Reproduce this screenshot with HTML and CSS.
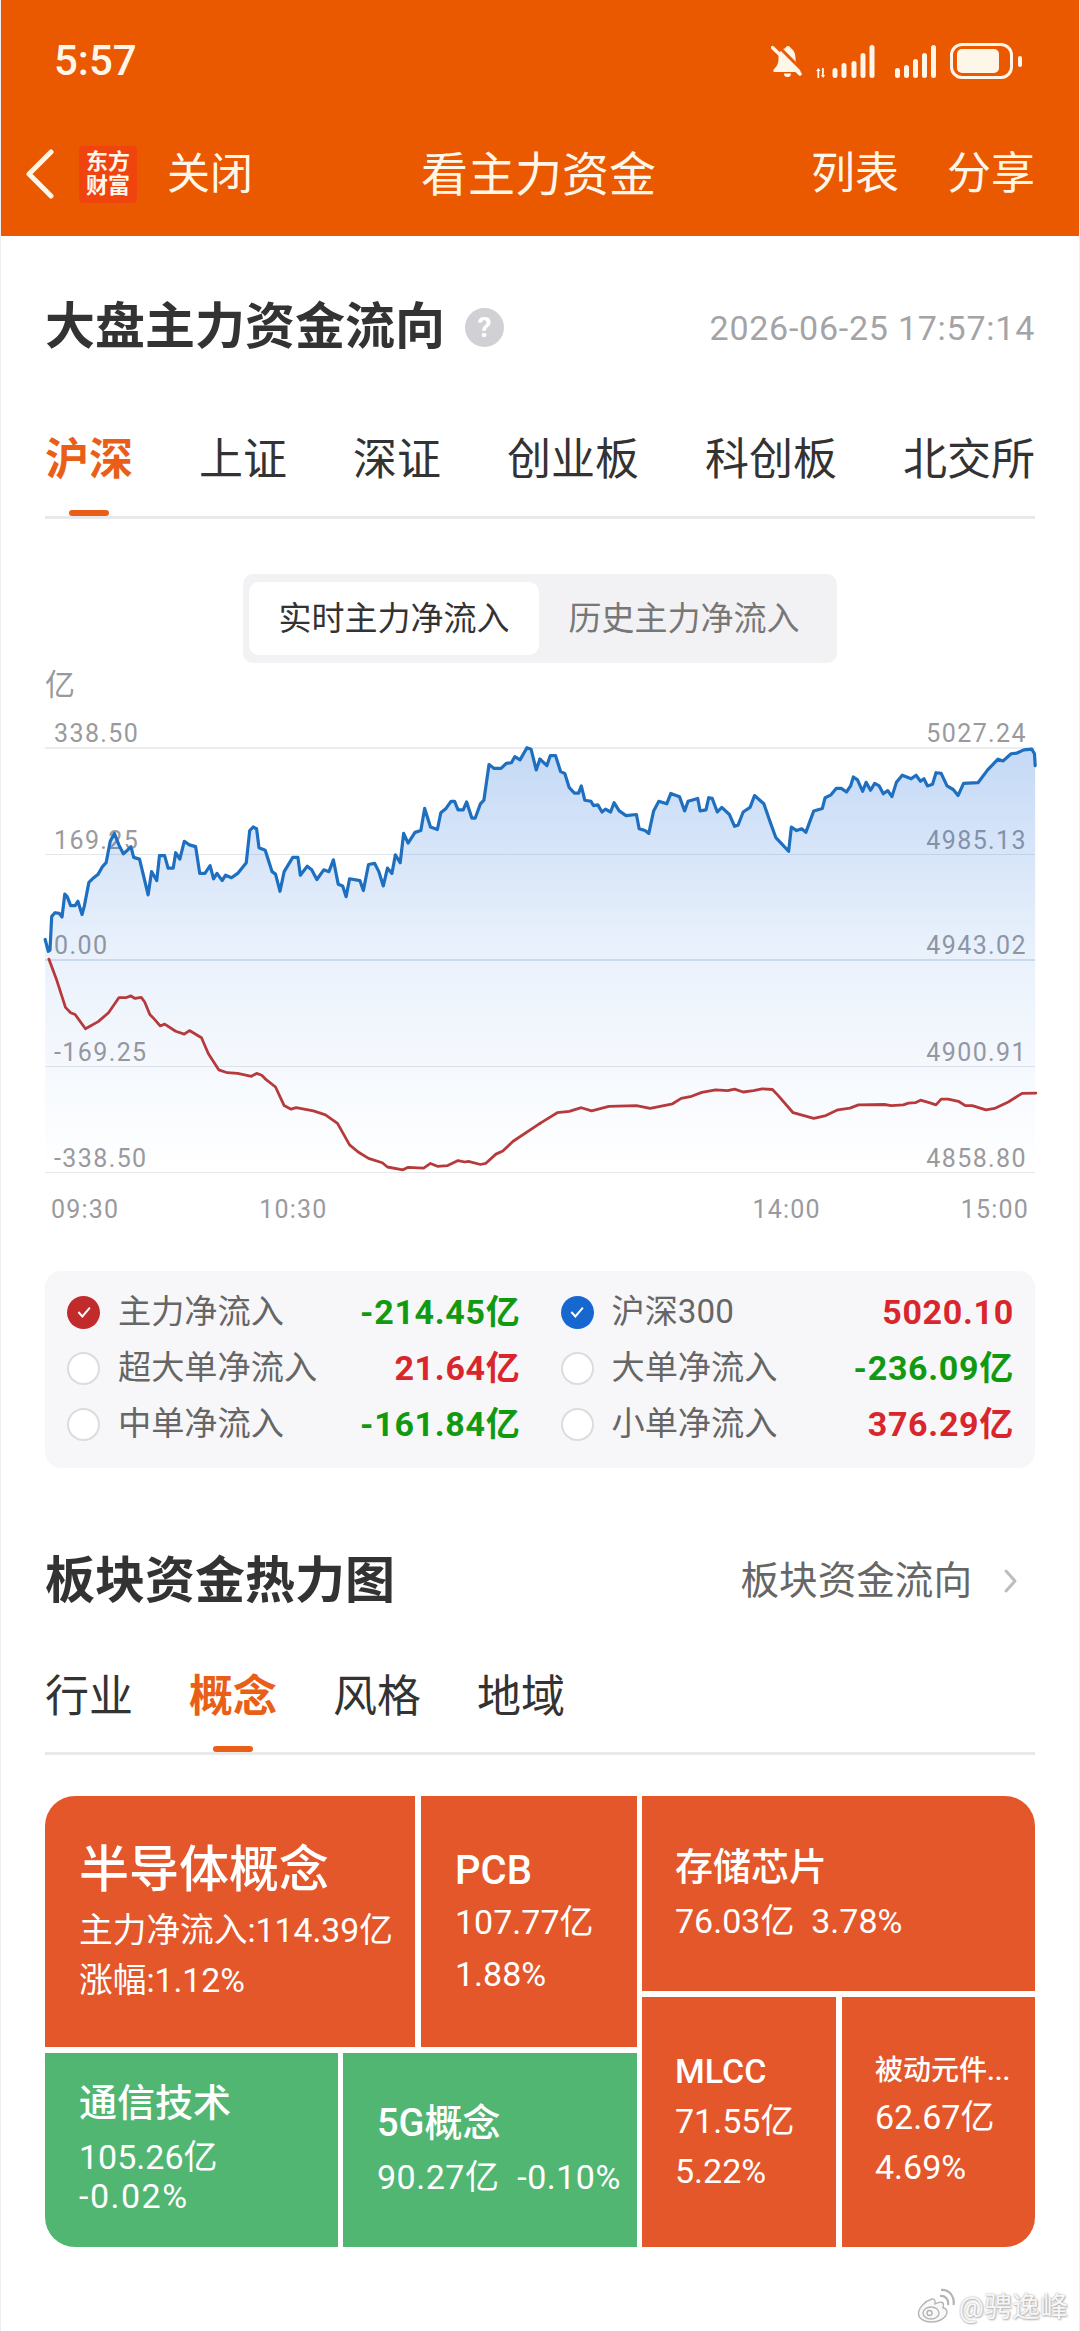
FILE: index.html
```html
<!DOCTYPE html>
<html lang="zh-CN">
<head>
<meta charset="utf-8">
<title>看主力资金</title>
<link rel="stylesheet" href="styles.css">
</head>
<body>
<div class="page">
  <header class="appbar">
    <div class="status">
      <span class="clock">5:57</span>
      <div class="status-icons">
        <svg class="ic-bell" viewBox="0 0 32 34" aria-hidden="true">
          <path d="M17 2c-1.500 0-2.500 1-2.700 2.300C9.500 5.500 7.500 9.500 7.500 14c0 5-1 8-5 11.500V28h27v-2.500c-4-3.500-5-6.500-5-11.500 0-4.500-2-8.500-4.800-9.700C19.500 3 18.500 2 17 2zM13 29.500a3.500 3.500 0 0 0 7 0z"/>
          <path class="bell-gap" d="M5 0l27 27"/>
          <path class="bell-cut" d="M1.500 3.500L29 30"/>
        </svg>
        <svg class="ic-signal-a" viewBox="0 0 60 33" aria-hidden="true">
          <path d="M1 26l2.500-3 2 3H4.200v7H2.400v-7zM7 23h1.800v7h1.300l-2 3-2.300-3H7z"/>
          <rect x="17.500" y="23" width="5" height="10" rx="2.500"/>
          <rect x="26.500" y="18" width="5" height="15" rx="2.500"/>
          <rect x="36.500" y="16" width="5" height="17" rx="2.500"/>
          <rect x="45.500" y="8" width="5" height="25" rx="2.500"/>
          <rect x="54.500" y="0" width="5" height="33" rx="2.500"/>
        </svg>
        <svg class="ic-signal-b" viewBox="0 0 41 33" aria-hidden="true">
          <rect x="0" y="23" width="5" height="10" rx="2.500"/>
          <rect x="9" y="20" width="5" height="13" rx="2.500"/>
          <rect x="18" y="14" width="5" height="19" rx="2.500"/>
          <rect x="27" y="8" width="5" height="25" rx="2.500"/>
          <rect x="36" y="0" width="5" height="33" rx="2.500"/>
        </svg>
        <div class="battery"><span class="battery-fill"></span></div>
        <span class="battery-nub"></span>
      </div>
    </div>
    <nav class="navbar">
      <div class="nav-left">
        <svg class="ic-back" viewBox="0 0 31 50" aria-hidden="true"><path d="M27 3L5 25l22 22"/></svg>
        <div class="logo"><span>东方</span><span>财富</span></div>
        <span class="nav-close">关闭</span>
      </div>
      <div class="nav-title">看主力资金</div>
      <div class="nav-right"><span>列表</span><span>分享</span></div>
    </nav>
  </header>

  <main class="content">
    <div class="section-head">
      <h1 class="section-title">大盘主力资金流向</h1>
      <span class="help">?</span>
      <span class="stamp">2026-06-25 17:57:14</span>
    </div>

    <div class="tabs tabs-spread">
      <span class="tab tab-active">沪深</span>
      <span class="tab">上证</span>
      <span class="tab">深证</span>
      <span class="tab">创业板</span>
      <span class="tab">科创板</span>
      <span class="tab">北交所</span>
    </div>

    <div class="segment">
      <span class="seg seg-on">实时主力净流入</span>
      <span class="seg">历史主力净流入</span>
    </div>

    <div class="unit">亿</div>
    <div class="plot">
      <div class="grid">
        <div class="grid-row grid-first"><span>338.50</span><span>5027.24</span></div>
        <div class="grid-row"><span>169.25</span><span>4985.13</span></div>
        <div class="grid-row grid-mid"><span>0.00</span><span>4943.02</span></div>
        <div class="grid-row"><span>-169.25</span><span>4900.91</span></div>
        <div class="grid-row"><span>-338.50</span><span>4858.80</span></div>
      </div>
      <svg class="lines" viewBox="130.52 90 2874.96 1318.8" preserveAspectRatio="none" aria-hidden="true">
        <defs>
          <linearGradient id="areaFade" gradientUnits="userSpaceOnUse" x1="0" y1="220" x2="0" y2="1407">
            <stop offset="0" stop-color="#1e6edc" stop-opacity=".26"/>
            <stop offset=".5" stop-color="#1e6edc" stop-opacity=".09"/>
            <stop offset="1" stop-color="#1e6edc" stop-opacity="0"/>
          </linearGradient>
        </defs>
        <!-- morning half -->
        <g>
          <polygon class="area" points="131,755 140,788 145,785 150,690 160,680 172,682 180,692 188,628 195,635 205,660 218,660 226,648 238,685 245,660 258,595 272,582 285,572 298,550 308,540 320,480 332,458 345,490 358,515 370,505 380,495 388,525 405,530 415,570 430,630 440,565 455,590 463,520 478,520 488,555 503,555 510,512 522,530 535,480 550,490 568,495 580,570 595,570 610,548 620,585 630,570 645,590 655,575 672,582 690,570 715,540 725,450 735,440 745,445 752,498 770,505 790,565 800,572 813,620 825,565 850,525 865,525 872,575 892,550 905,560 920,587 940,560 955,565 968,532 982,600 995,605 1005,635 1015,585 1045,590 1055,618 1070,545 1088,542 1100,565 1113,605 1125,555 1138,570 1148,518 1162,540 1172,458 1185,485 1205,455 1222,450 1233,388 1250,440 1270,447 1280,400 1295,388 1310,368 1320,368 1330,392 1345,392 1355,370 1370,415 1380,415 1395,375 1405,365 1420,265 1435,276 1455,276 1470,262 1485,260 1495,243 1510,252 1530,218 1542,222 1557,280 1568,250 1568,1407 131,1407"/>
          <polyline class="line-blue" points="131,755 140,788 145,785 150,690 160,680 172,682 180,692 188,628 195,635 205,660 218,660 226,648 238,685 245,660 258,595 272,582 285,572 298,550 308,540 320,480 332,458 345,490 358,515 370,505 380,495 388,525 405,530 415,570 430,630 440,565 455,590 463,520 478,520 488,555 503,555 510,512 522,530 535,480 550,490 568,495 580,570 595,570 610,548 620,585 630,570 645,590 655,575 672,582 690,570 715,540 725,450 735,440 745,445 752,498 770,505 790,565 800,572 813,620 825,565 850,525 865,525 872,575 892,550 905,560 920,587 940,560 955,565 968,532 982,600 995,605 1005,635 1015,585 1045,590 1055,618 1070,545 1088,542 1100,565 1113,605 1125,555 1138,570 1148,518 1162,540 1172,458 1185,485 1205,455 1222,450 1233,388 1250,440 1270,447 1280,400 1295,388 1310,368 1320,368 1330,392 1345,392 1355,370 1370,415 1380,415 1395,375 1405,365 1420,265 1435,276 1455,276 1470,262 1485,260 1495,243 1510,252 1530,218 1542,222 1557,280 1568,250"/>
          <polyline class="line-red" points="142,810 165,870 190,945 205,960 218,965 248,1005 285,985 315,960 345,918 365,918 380,913 392,920 410,917 420,930 435,965 450,980 465,997 478,992 510,1012 535,1020 550,1010 585,1030 605,1075 635,1120 660,1128 690,1130 730,1138 745,1130 760,1135 770,1145 800,1168 825,1220 845,1230 860,1226 910,1235 945,1246 980,1270 1015,1330 1040,1350 1070,1368 1110,1380 1125,1392 1170,1400 1185,1393 1230,1395 1250,1382 1270,1390 1300,1388 1330,1374 1350,1378 1360,1376 1395,1385 1410,1382 1440,1356 1460,1347 1490,1320 1568,1270"/>
        </g>
        <!-- afternoon half -->
        <g transform="translate(1568 0)">
          <polygon class="area" points="0,250 20,268 30,240 45,240 60,285 72,290 85,330 100,345 112,345 120,325 130,365 148,368 155,380 168,378 180,398 190,390 205,398 215,372 230,395 250,408 280,405 288,445 305,450 316,458 330,395 345,368 368,375 380,346 405,355 420,395 430,368 458,360 465,395 482,392 490,358 500,360 515,398 528,385 550,405 565,438 575,435 590,398 610,385 623,352 650,375 670,430 685,470 700,485 722,508 730,440 745,450 760,445 772,455 795,395 820,388 828,358 845,350 860,332 875,332 890,342 902,325 910,300 922,308 937,340 947,315 960,337 972,318 985,325 997,347 1010,338 1022,355 1035,315 1052,295 1078,305 1092,295 1105,312 1115,305 1125,325 1140,320 1150,288 1165,290 1182,325 1200,335 1214,352 1230,318 1272,316 1300,280 1330,250 1345,255 1368,235 1385,233 1405,224 1428,222 1436,235 1438,268 1438,1407 0,1407"/>
          <polyline class="line-blue" points="0,250 20,268 30,240 45,240 60,285 72,290 85,330 100,345 112,345 120,325 130,365 148,368 155,380 168,378 180,398 190,390 205,398 215,372 230,395 250,408 280,405 288,445 305,450 316,458 330,395 345,368 368,375 380,346 405,355 420,395 430,368 458,360 465,395 482,392 490,358 500,360 515,398 528,385 550,405 565,438 575,435 590,398 610,385 623,352 650,375 670,430 685,470 700,485 722,508 730,440 745,450 760,445 772,455 795,395 820,388 828,358 845,350 860,332 875,332 890,342 902,325 910,300 922,308 937,340 947,315 960,337 972,318 985,325 997,347 1010,338 1022,355 1035,315 1052,295 1078,305 1092,295 1105,312 1115,305 1125,325 1140,320 1150,288 1165,290 1182,325 1200,335 1214,352 1230,318 1272,316 1300,280 1330,250 1345,255 1368,235 1385,233 1405,224 1428,222 1436,235 1438,268"/>
          <polyline class="line-red" points="0,1270 20,1258 50,1240 85,1236 120,1226 150,1235 200,1222 280,1220 320,1228 385,1215 410,1200 440,1194 470,1183 510,1176 545,1178 565,1174 590,1182 620,1178 645,1173 675,1175 690,1190 735,1240 795,1256 830,1248 865,1232 900,1227 925,1218 1000,1217 1020,1220 1055,1218 1070,1213 1090,1212 1105,1205 1130,1212 1150,1218 1165,1202 1185,1202 1215,1208 1235,1220 1255,1220 1295,1232 1320,1228 1360,1210 1400,1186 1440,1185"/>
        </g>
      </svg>
    </div>
    <div class="axis">
      <span>09:30</span><span>10:30</span>
      <span class="axis-pm">14:00</span><span>15:00</span>
    </div>

    <div class="legend">
      <div class="legend-row">
        <span class="dot dot-red"><svg viewBox="0 0 16 16" aria-hidden="true"><path d="M3.500 8l3.200 3.500 6-7"/></svg></span>
        <span class="legend-name">主力净流入</span><b class="val down">-214.45亿</b>
      </div>
      <div class="legend-row">
        <span class="dot dot-blue"><svg viewBox="0 0 16 16" aria-hidden="true"><path d="M3.500 8l3.200 3.500 6-7"/></svg></span>
        <span class="legend-name">沪深300</span><b class="val up">5020.10</b>
      </div>
      <div class="legend-row">
        <span class="dot"></span>
        <span class="legend-name">超大单净流入</span><b class="val up">21.64亿</b>
      </div>
      <div class="legend-row">
        <span class="dot"></span>
        <span class="legend-name">大单净流入</span><b class="val down">-236.09亿</b>
      </div>
      <div class="legend-row">
        <span class="dot"></span>
        <span class="legend-name">中单净流入</span><b class="val down">-161.84亿</b>
      </div>
      <div class="legend-row">
        <span class="dot"></span>
        <span class="legend-name">小单净流入</span><b class="val up">376.29亿</b>
      </div>
    </div>

    <div class="section-head section-second">
      <h2 class="section-title">板块资金热力图</h2>
      <span class="more">板块资金流向</span>
      <svg class="ic-more" viewBox="0 0 15 26" aria-hidden="true"><path d="M3 3l9 10-9 10"/></svg>
    </div>

    <div class="tabs tabs-tight">
      <span class="tab">行业</span>
      <span class="tab tab-active">概念</span>
      <span class="tab">风格</span>
      <span class="tab">地域</span>
    </div>

    <div class="heatmap">
      <div class="heat-left">
        <div class="heat-row heat-row-top">
          <div class="cell hot cell-semi">
            <div class="cell-big">半导体概念</div>
            <div class="cell-line">主力净流入:114.39亿</div>
            <div class="cell-line">涨幅:1.12%</div>
          </div>
          <div class="cell hot cell-pcb">
            <div class="cell-name">PCB</div>
            <div class="cell-line">107.77亿</div>
            <div class="cell-line">1.88%</div>
          </div>
        </div>
        <div class="heat-row heat-row-bottom">
          <div class="cell cool cell-comm">
            <div class="cell-name">通信技术</div>
            <div class="cell-line">105.26亿</div>
            <div class="cell-line cell-neg">-0.02%</div>
          </div>
          <div class="cell cool cell-5g">
            <div class="cell-name">5G概念</div>
            <div class="cell-line">90.27亿&nbsp;&nbsp;-0.10%</div>
          </div>
        </div>
      </div>
      <div class="heat-right">
        <div class="cell hot cell-store">
          <div class="cell-name">存储芯片</div>
          <div class="cell-line">76.03亿&nbsp;&nbsp;3.78%</div>
        </div>
        <div class="heat-row heat-row-low">
          <div class="cell hot cell-mlcc">
            <div class="cell-name">MLCC</div>
            <div class="cell-line">71.55亿</div>
            <div class="cell-line">5.22%</div>
          </div>
          <div class="cell hot cell-passive">
            <div class="cell-name">被动元件...</div>
            <div class="cell-line">62.67亿</div>
            <div class="cell-line">4.69%</div>
          </div>
        </div>
      </div>
    </div>
  </main>

  <div class="mark">
    <svg class="mark-logo" viewBox="0 0 38 35" aria-hidden="true">
      <path d="M15 11C8 13 1.500 20 1.500 25.500 1.500 31 8 34 14.500 34 23 34 30 29 30 24c0-2.500-2-3.800-4-4.300 1-3 .5-5-1.500-5.500-2-.4-4.500.6-6.500 1.600.4-3-.5-5.500-3-4.800z"/>
      <ellipse class="mark-eye" cx="14" cy="25" rx="8" ry="6"/>
      <circle class="mark-eye" cx="12.500" cy="25" r="2.500"/>
      <path class="mark-arc" d="M23 8c5-.5 9 3 8 9M24 2c9-.5 14 7 12.500 15"/>
    </svg>
    <span>@骋逸峰</span>
  </div>
</div>
</body>
</html>
```
FILE: styles.css
```css
* { box-sizing: border-box; }

html, body { margin: 0; padding: 0; background: #fff; }

body {
  font-family: Roboto, "Noto Sans CJK SC", sans-serif;
  color: #333;
}

.page {
  position: relative;
  width: 1080px;
  height: 2331px;
  overflow: hidden;
  background: #fff;
  border-left: 1px solid #eeeeee;
  border-right: 1px solid #eeeeee;
}

/* app bar */
.appbar {
  height: 236px;
  margin: 0 -1px;
  background: #ea5800;
  color: #fff6ea;
}

.status {
  display: flex;
  align-items: center;
  justify-content: space-between;
  height: 112px;
  padding: 10px 58px 0 54px;
}

.clock {
  font-size: 42px;
  font-weight: 500;
  line-height: 44px;
}

.status-icons {
  display: flex;
  align-items: center;
}

.status-icons svg { display: block; fill: #fff6ea; }

.ic-bell { width: 32px; height: 34px; margin-right: 12px; }
.bell-gap { fill: none; stroke: #ea5800; stroke-width: 3; }
.bell-cut { fill: none; stroke: #fff6ea; stroke-width: 3.500; stroke-linecap: round; }
.ic-signal-a { width: 60px; height: 33px; margin-right: 20px; }
.ic-signal-b { width: 41px; height: 33px; margin-right: 14px; }

.battery {
  width: 63px;
  height: 36px;
  padding: 3px 4px;
  border: 3px solid #fff6ea;
  border-radius: 12px;
}

.battery-fill {
  display: block;
  width: 42px;
  height: 100%;
  background: #fff6ea;
  border-radius: 5px;
}

.battery-nub {
  width: 4px;
  height: 11px;
  margin-left: 5px;
  background: #fff6ea;
  border-radius: 2px;
}

.navbar {
  display: grid;
  grid-template-columns: 1fr auto 1fr;
  align-items: center;
  height: 124px;
  padding: 0 45px 0 24px;
}

.nav-left { display: flex; align-items: center; }

.ic-back {
  display: block;
  width: 31px;
  height: 50px;
  fill: none;
  stroke: #fff6ea;
  stroke-width: 5;
  stroke-linecap: round;
  stroke-linejoin: round;
}

.logo {
  display: flex;
  flex-direction: column;
  align-items: center;
  justify-content: center;
  width: 58px;
  height: 57px;
  margin-left: 24px;
  background: #f0440f;
  border-radius: 4px;
  font-size: 22px;
  font-weight: 700;
  line-height: 24px;
}

.nav-close { margin-left: 30px; font-size: 43px; line-height: 60px; }
.nav-title { margin-left: 18px; padding-top: 2px; font-size: 47px; line-height: 60px; }

.nav-right {
  display: flex;
  justify-content: flex-end;
  gap: 48px;
  font-size: 44px;
  line-height: 60px;
}

/* page body */
.content { padding: 61px 44px 0; }

.section-head { display: flex; align-items: center; height: 60px; }
.section-second { margin-top: 83px; }

.section-title {
  margin: 0;
  font-size: 50px;
  font-weight: 700;
  line-height: 60px;
  color: #333;
}

.help {
  width: 39px;
  height: 39px;
  margin-left: 20px;
  background: #d1d1d5;
  border-radius: 50%;
  color: #fff;
  font-size: 28px;
  font-weight: 700;
  line-height: 39px;
  text-align: center;
}

.stamp {
  margin-left: auto;
  margin-top: 2px;
  color: #a4a4a8;
  font-size: 34px;
  letter-spacing: .75px;
  line-height: 40px;
}

.more { margin-left: auto; color: #666; font-size: 38.600px; line-height: 50px; }

.ic-more {
  display: block;
  width: 15px;
  height: 26px;
  margin: 0 17px 0 31px;
  fill: none;
  stroke: #bdbdc0;
  stroke-width: 3;
  stroke-linecap: round;
  stroke-linejoin: round;
}

.tabs {
  display: flex;
  margin-top: 73px;
  padding-bottom: 26px;
  border-bottom: 3px solid #e9e9eb;
}

.tabs-spread { justify-content: space-between; }
.tabs-tight { gap: 56px; margin-top: 56px; padding-bottom: 25px; }

.tab {
  position: relative;
  color: #333;
  font-size: 44px;
  line-height: 60px;
}

.tab-active { color: #ea5f18; font-weight: 700; }

.tab-active::after {
  content: "";
  position: absolute;
  left: 50%;
  bottom: -26px;
  width: 40px;
  height: 6px;
  margin-left: -20px;
  background: #ea5f18;
  border-radius: 3px;
}

.tabs-tight .tab-active::after { bottom: -25px; }

.segment {
  display: flex;
  align-items: center;
  width: 594px;
  height: 89px;
  margin: 55px auto 0;
  padding: 0 6px;
  background: #f2f2f4;
  border-radius: 10px;
}

.seg {
  width: 290px;
  height: 73px;
  color: #777;
  font-size: 33px;
  line-height: 73px;
  text-align: center;
}

.seg-on { background: #fff; border-radius: 10px; color: #333; }

/* trend chart */
.unit {
  height: 40px;
  margin-top: -1px;
  color: #999;
  font-size: 30px;
  line-height: 46px;
}

.plot { position: relative; height: 471px; }

.grid { display: flex; flex-direction: column; height: 100%; }

.grid-row {
  display: flex;
  align-items: flex-end;
  justify-content: space-between;
  height: 106px;
  padding: 0 8px 1px 9px;
  border-bottom: 1px solid #e4e7ec;
  color: #9a9a9e;
  font-size: 25px;
  letter-spacing: 1.400px;
  line-height: 24px;
}

.grid-first { height: 47px; border-bottom: 2px solid #ececee; }
.grid-mid { border-bottom: 2px solid #dde4ee; }

.lines {
  position: absolute;
  top: 0;
  left: 0;
  width: 100%;
  height: 100%;
  overflow: visible;
}

.area { fill: url(#areaFade); }

.line-blue, .line-red {
  fill: none;
  stroke-linejoin: round;
  stroke-linecap: round;
  vector-effect: non-scaling-stroke;
}

.line-blue { stroke: #1f6fc0; stroke-width: 3.200; }
.line-red { stroke: #b63a3c; stroke-width: 2.800; }

.axis {
  display: flex;
  gap: 140px;
  margin-top: 22px;
  padding: 0 6px;
  color: #9a9a9e;
  font-size: 25px;
  letter-spacing: 1.200px;
  line-height: 30px;
}

.axis-pm { margin-left: auto; }

/* legend */
.legend {
  display: grid;
  grid-template-columns: 1fr 1fr;
  column-gap: 40px;
  margin-top: 46px;
  padding: 13px 21px 16px 22px;
  background: #f7f7f9;
  border-radius: 16px;
}

.legend-row { display: flex; align-items: center; height: 56px; }

.dot {
  display: flex;
  align-items: center;
  justify-content: center;
  flex: none;
  width: 33px;
  height: 33px;
  background: #fff;
  border: 2px solid #dcdce0;
  border-radius: 50%;
}

.dot svg {
  width: 20px;
  height: 20px;
  fill: none;
  stroke: #fff;
  stroke-width: 1.600;
}

.dot-red { background: #c22b2b; border: 0; }
.dot-blue { background: #1668d0; border: 0; }

.legend-name { margin-left: 18px; color: #666; font-size: 33.200px; line-height: 44px; }

.val {
  margin-left: auto;
  font-size: 34px;
  font-weight: 700;
  letter-spacing: .7px;
  line-height: 44px;
}

.up { color: #d9262d; }
.down { color: #119a11; }

/* heat map */
.heatmap {
  display: flex;
  gap: 5px;
  height: 451px;
  margin-top: 41px;
  overflow: hidden;
  border-radius: 30px;
  color: #fff;
}

.heat-left, .heat-right { display: flex; flex-direction: column; gap: 6px; }
.heat-left { width: 592px; }
.heat-right { width: 393px; }

.heat-row { display: flex; }
.heat-row-top { gap: 6px; height: 251px; }
.heat-row-bottom { gap: 5px; height: 194px; }
.heat-row-low { gap: 6px; height: 250px; }

.hot { background: #e4572b; }
.cool { background: #52b673; }

.cell { padding-left: 34px; }
.cell-semi { width: 370px; padding-top: 44px; }
.cell-pcb { width: 216px; padding-top: 50px; }
.cell-comm { width: 293px; padding-top: 25px; }
.cell-5g { width: 294px; padding-top: 45px; }
.cell-store { height: 195px; padding: 46px 0 0 33px; }
.cell-mlcc { width: 194px; padding: 49px 0 0 33px; }
.cell-passive { width: 193px; padding: 49px 0 0 33px; }

.cell-big { margin-bottom: 6px; font-size: 50px; font-weight: 500; line-height: 60px; }
.cell-name { font-size: 38px; font-weight: 500; line-height: 50px; }
.cell-pcb .cell-name { font-size: 40px; }
.cell-mlcc .cell-name { font-size: 34px; }
.cell-passive .cell-name { margin-bottom: -4px; font-size: 28px; }

.cell-line { font-size: 34px; line-height: 50px; white-space: nowrap; }
.cell-semi .cell-line { font-size: 33.700px; }
.cell-pcb .cell-line, .cell-store .cell-line { line-height: 52px; }
.cell-store .cell-name { margin-bottom: 3px; }
.cell-comm .cell-line { line-height: 39px; }
.cell-comm .cell-name { margin-bottom: 10px; }
.cell-neg { letter-spacing: 1.500px; }
.cell-5g .cell-line { margin-top: 9px; letter-spacing: .5px; line-height: 40px; }

/* source tag in the corner */
.mark {
  position: absolute;
  top: 2288px;
  right: 11px;
  display: flex;
  align-items: flex-start;
  gap: 4px;
  color: #f7f7f7;
  font-size: 28px;
  line-height: 40px;
  text-shadow: 0 0 2px #a8a8a8, 1px 1px 2px #b4b4b4;
}

.mark-logo {
  display: block;
  width: 38px;
  height: 35px;
  fill: #f9f9f9;
  stroke: #b4b4b4;
  stroke-width: 1.400;
}

.mark-eye { fill: none; }
.mark-arc { fill: none; stroke-width: 2.200; }
```
